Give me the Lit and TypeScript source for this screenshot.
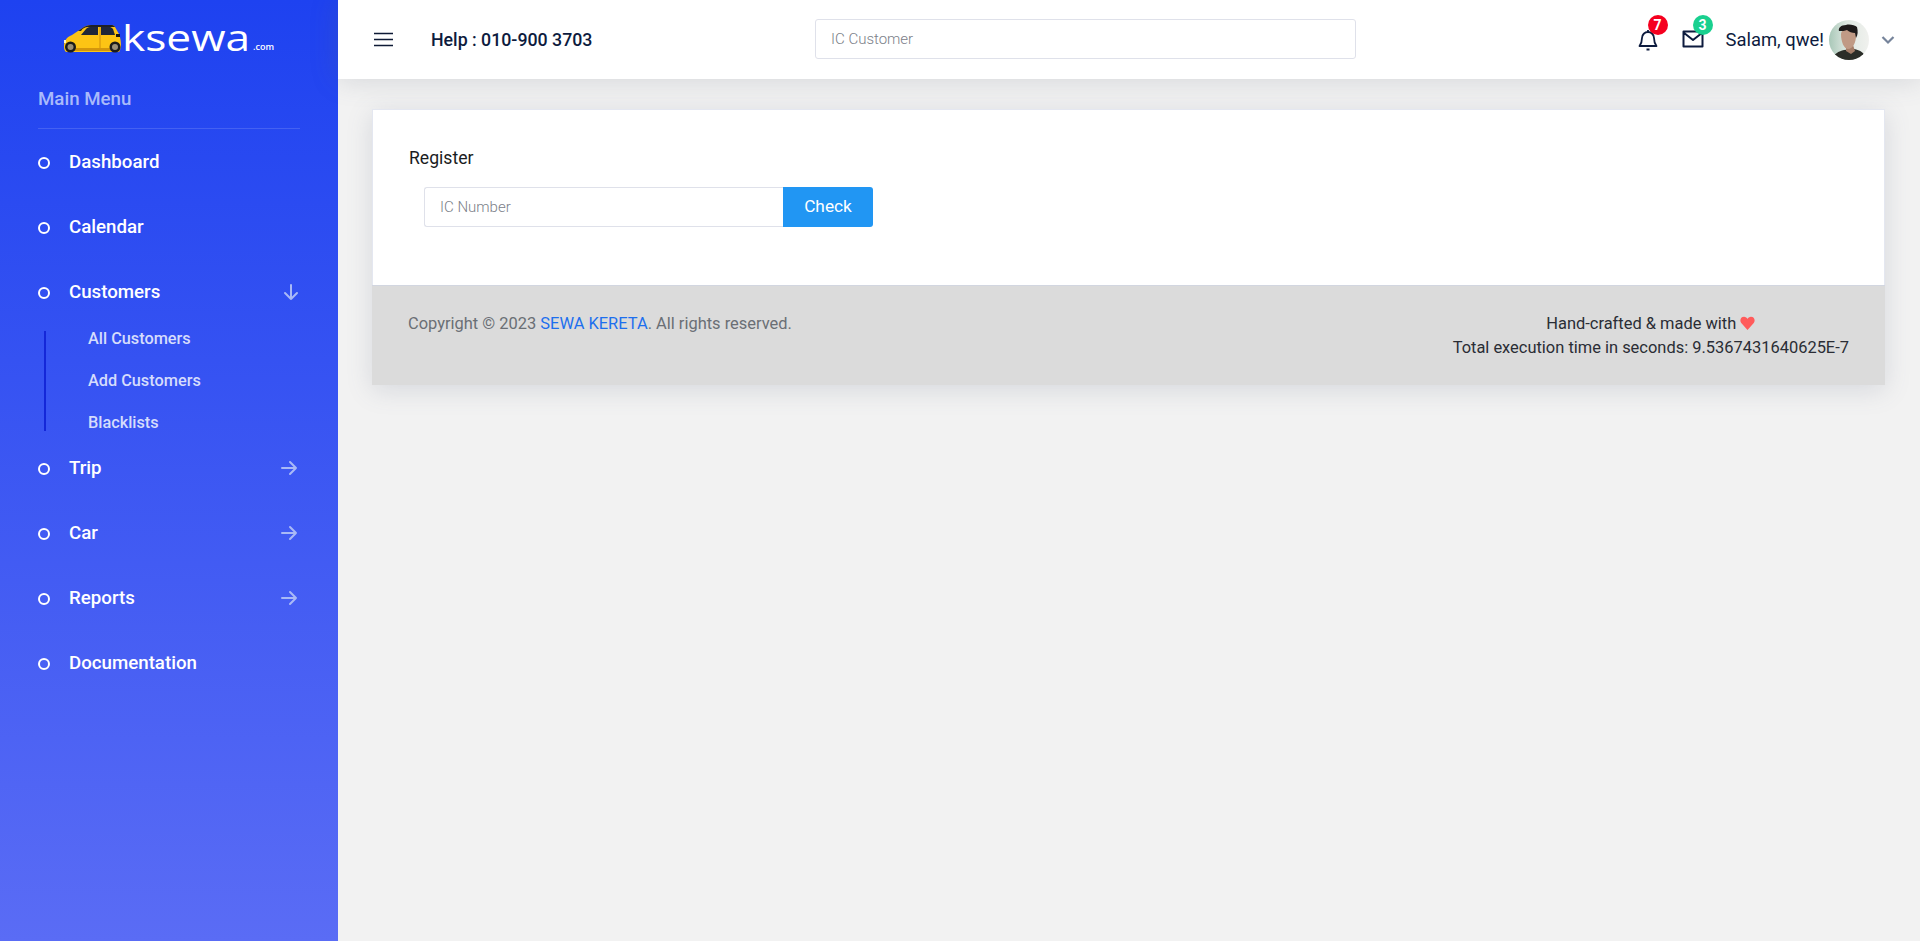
import { LitElement, html, css, svg } from "lit";
import { customElement } from "lit/decorators.js";

const arrowRight = svg`<path d="M3 10h14M11 4l6 6-6 6" fill="none" stroke="currentColor" stroke-width="2" stroke-linecap="round" stroke-linejoin="round"/>`;
const arrowDown = svg`<path d="M10 3v14M4 11l6 6 6-6" fill="none" stroke="currentColor" stroke-width="2" stroke-linecap="round" stroke-linejoin="round"/>`;

@customElement("app-root")
export class AppRoot extends LitElement {
  static styles = css`
    :host { display: block; font-family: Roboto, "Liberation Sans", sans-serif; }
    * { box-sizing: border-box; }
    .page { display: flex; height: 941px; background: #f2f2f2; overflow: hidden; }
    .side { width: 338px; flex: none; background: linear-gradient(180deg, #1e42f0 0%, #5a6cf5 100%); color: #fff; }
    .logo { height: 79px; display: flex; align-items: flex-start; padding: 20px 0 0 64px; }
    .car { width: 58px; height: 28px; margin-top: 5px; flex: none; }
    .word { font-family: "Open Sans", sans-serif; font-size: 36px; line-height: 36px; width: 131px; flex: none; transform: scaleX(1.23); transform-origin: left center; white-space: nowrap; }
    .com { font-family: "Open Sans", sans-serif; font-size: 9px; font-weight: 600; margin-top: 22px; line-height: 10px; }
    .mm { margin: 0 38px; height: 50px; padding-top: 10px; font-size: 18.7px; line-height: 21px; font-weight: 500; color: #a9bafb; border-bottom: 1px solid rgba(255,255,255,.14); }
    .item { height: 65px; display: flex; align-items: center; padding: 0 38px; font-size: 18.7px; font-weight: 500; }
    .ring { width: 12px; height: 12px; border-radius: 50%; border: 2px solid #fff; margin-right: 19px; margin-top: 2px; flex: none; }
    .arrow { width: 20px; height: 20px; margin-left: auto; color: #a9b9f6; margin-right: -1px; }
    .arrow.r { margin-right: 1px; }
    .subs { margin: 7px 0 4px 44px; height: 100px; border-left: 2px solid #1427d8; padding-left: 42px; display: flex; flex-direction: column; justify-content: space-between; font-size: 16.3px; font-weight: 500; color: #d5dcfc; line-height: 16px; }
    .main { flex: 1; display: flex; flex-direction: column; min-width: 0; }
    .top { height: 79px; flex: none; background: #fff; display: flex; align-items: center; padding-left: 34px; box-shadow: 0 0 28px rgba(90,100,120,.22); position: relative; }
    .burger { width: 24px; height: 24px; color: #0e1a36; flex: none; }
    .help { font-size: 17.75px; font-weight: 500; color: #0d1b3e; width: 384px; margin-left: 35px; flex: none; white-space: nowrap; }
    .search { width: 541px; height: 40px; flex: none; margin-bottom: 2px; border: 1px solid #dfe1ea; border-radius: 3px; padding: 0 15px; font: 300 15px Roboto, sans-serif; outline: none; background: #fff; color: #333; }
    input::placeholder { color: #7b8089; opacity: 1; }
    .right { margin-left: auto; display: flex; align-items: center; padding-right: 25px; }
    .ico { position: relative; width: 26px; height: 26px; color: #0d1b3e; flex: none; }
    .ico svg { display: block; width: 26px; height: 26px; }
    .badge { position: absolute; top: -11.5px; left: 13px; width: 20px; height: 20px; border-radius: 50%; color: #fff; font-size: 14px; font-weight: 700; display: flex; align-items: center; justify-content: center; }
    .red { background: #f5001f; }
    .green { background: #19d08f; }
    .mail { margin-left: 19px; }
    .salam { margin-left: 20px; font-size: 18.4px; color: #0d1b3e; white-space: nowrap; }
    .av { width: 40px; height: 40px; margin-left: 5px; flex: none; display: block; }
    .chev { width: 14px; height: 14px; margin-left: 12px; color: #76849b; flex: none; }
    .content { padding: 30px 35px 0 34px; }
    .card { box-shadow: 0 5px 24px rgba(90,100,130,.18); }
    .body { background: #fff; height: 176px; border: 1px solid #e4e7f0; border-bottom: none; padding: 38px 36px 0; }
    .title { font-size: 17.6px; line-height: 21px; color: #1a1c22; }
    .group { display: flex; margin: 18px 0 0 15px; height: 40px; }
    .ic { width: 359px; height: 40px; border: 1px solid #dfe1ea; border-right: none; border-radius: 3px 0 0 3px; padding: 0 15px; font: 300 15px Roboto, sans-serif; outline: none; background: #fff; }
    .btn { width: 90px; height: 40px; border: none; border-radius: 0 3px 3px 0; background: #2196f3; color: #fff; font: 400 17.3px Roboto, sans-serif; padding: 0 0 2px; }
    .foot { background: #dbdbdb; height: 100px; border-top: 1px solid #d2d6e0; padding: 26px 36px 0; display: flex; justify-content: space-between; font-size: 16.45px; line-height: 24px; }
    .copy { color: #6a6f75; }
    .copy a { color: #1d6fee; text-decoration: none; }
    .made { text-align: center; color: #2a2d35; }
    .heart { display: inline-block; width: 15px; height: 14px; vertical-align: -1px; }
  `;

  private nav(label: string, arrow?: "r" | "d") {
    return html`<div class="item"><span class="ring"></span><span>${label}</span>
      ${arrow ? html`<svg class="arrow ${arrow === "r" ? "r" : ""}" viewBox="0 0 20 20">${arrow === "r" ? arrowRight : arrowDown}</svg>` : ""}</div>`;
  }

  render() {
    return html`<div class="page">
      <aside class="side">
        <div class="logo">
          <svg class="car" viewBox="0 0 58 28">
            <path d="M0 21c0-4 2-9 8-11l12-8c2-1 4-2 7-2h20c2 0 3 .500 4 2l4 7c1 3 2 6 2 12l-1 4c0 1-1 2-2 2H3c-2 0-3-2-3-6z" fill="#fdc414"/>
            <path d="M14 6l6-4c2-1 4-2 7-2h20c2 0 3 .500 4 2H24c-3 0-5 1-7 4z" fill="#1e2026"/>
            <path d="M17 10l5-6c1-1 2-2 4-2h8v8zM37 2h9c1 0 2 1 3 2l2 6H37z" fill="#1f2638"/>
            <path d="M35 2h2v22h-2z" fill="#e6a90f"/>
            <path d="M2 23h54v3H2z" fill="#d4960c"/>
            <path d="M52 9h4v3h-4z" fill="#161616"/>
            <path d="M0 15h2v3H0z" fill="#fff3c4"/>
            <circle cx="6.500" cy="22" r="5.500" fill="#1b1b1b"/><circle cx="6.500" cy="22" r="3" fill="#9a8f78"/>
            <circle cx="51" cy="22" r="5.500" fill="#1b1b1b"/><circle cx="51" cy="22" r="3" fill="#9a8f78"/>
          </svg>
          <span class="word">ksewa</span><span class="com">.com</span>
        </div>
        <div class="mm">Main Menu</div>
        ${this.nav("Dashboard")}
        ${this.nav("Calendar")}
        ${this.nav("Customers", "d")}
        <div class="subs"><span>All Customers</span><span>Add Customers</span><span>Blacklists</span></div>
        ${this.nav("Trip", "r")}
        ${this.nav("Car", "r")}
        ${this.nav("Reports", "r")}
        ${this.nav("Documentation")}
      </aside>
      <div class="main">
        <header class="top">
          <svg class="burger" viewBox="0 0 24 24"><path d="M2 5.500h19M2 11.500h19M2 17.500h19" stroke="currentColor" stroke-width="1.700" fill="none"/></svg>
          <div class="help">Help : 010-900 3703</div>
          <input class="search" placeholder="IC Customer" />
          <div class="right">
            <div class="ico">
              <svg viewBox="0 0 26 26"><path d="M4.500 19c1.500-2 2.500-4 2.500-8a6 6 0 0 1 12 0c0 4 1 6 2.500 8zM13 3v2M11.500 22.500h3" fill="none" stroke="currentColor" stroke-width="1.800" stroke-linejoin="round"/></svg>
              <span class="badge red">7</span>
            </div>
            <div class="ico mail">
              <svg viewBox="0 0 26 26"><path d="M3.500 4.500h19v15h-19zM3.500 5.500L13 13l9.500-7.500" fill="none" stroke="currentColor" stroke-width="2" stroke-linejoin="round"/></svg>
              <span class="badge green">3</span>
            </div>
            <span class="salam">Salam, qwe!</span>
            <svg class="av" viewBox="0 0 40 40">
              <defs>
                <clipPath id="c"><circle cx="20" cy="20" r="20"/></clipPath>
                <linearGradient id="bg" x1="0" x2="1" y1="0" y2="0"><stop offset="0" stop-color="#a9c8b8"/><stop offset=".45" stop-color="#dfe8e2"/><stop offset="1" stop-color="#f0f1ee"/></linearGradient>
              </defs>
              <g clip-path="url(#c)">
                <rect width="40" height="40" fill="url(#bg)"/>
                <path d="M3 40c1-6 7-9 12-10l10-1c6 1 11 4 13 11z" fill="#2b2d28"/>
                <path d="M17 26l7-1 2 6-4 3-5-3z" fill="#a47d68"/>
                <path d="M12 14c0-3 3-5 8-5s7 3 7 7c0 6-3 13-8 13-4 0-7-7-7-15z" fill="#c09a85"/>
                <path d="M10 11c-1-3 2-6 7-6 3-1 9 0 11 2 1 4 1 8-1 11l-1-5c-3 0-6-1-8-3-2 1-5 1-8 1z" fill="#1d1a1a"/>
              </g>
            </svg>
            <svg class="chev" viewBox="0 0 14 14"><path d="M1.500 4l5.500 5.500L12.500 4" fill="none" stroke="currentColor" stroke-width="2.200"/></svg>
          </div>
        </header>
        <div class="content">
          <div class="card">
            <div class="body">
              <div class="title">Register</div>
              <div class="group"><input class="ic" placeholder="IC Number" /><button class="btn">Check</button></div>
            </div>
            <footer class="foot">
              <div class="copy">Copyright © 2023 <a>SEWA KERETA</a>. All rights reserved.</div>
              <div class="made">Hand-crafted &amp; made with <svg class="heart" viewBox="0 0 24 22"><path d="M12 22L2 11C-1 7 1 1 6.500 1 9 1 11 2.500 12 4.500 13 2.500 15 1 17.500 1 23 1 25 7 22 11z" fill="#ff5b5b"/></svg><br />Total execution time in seconds: 9.5367431640625E-7</div>
            </footer>
          </div>
        </div>
      </div>
    </div>`;
  }
}
